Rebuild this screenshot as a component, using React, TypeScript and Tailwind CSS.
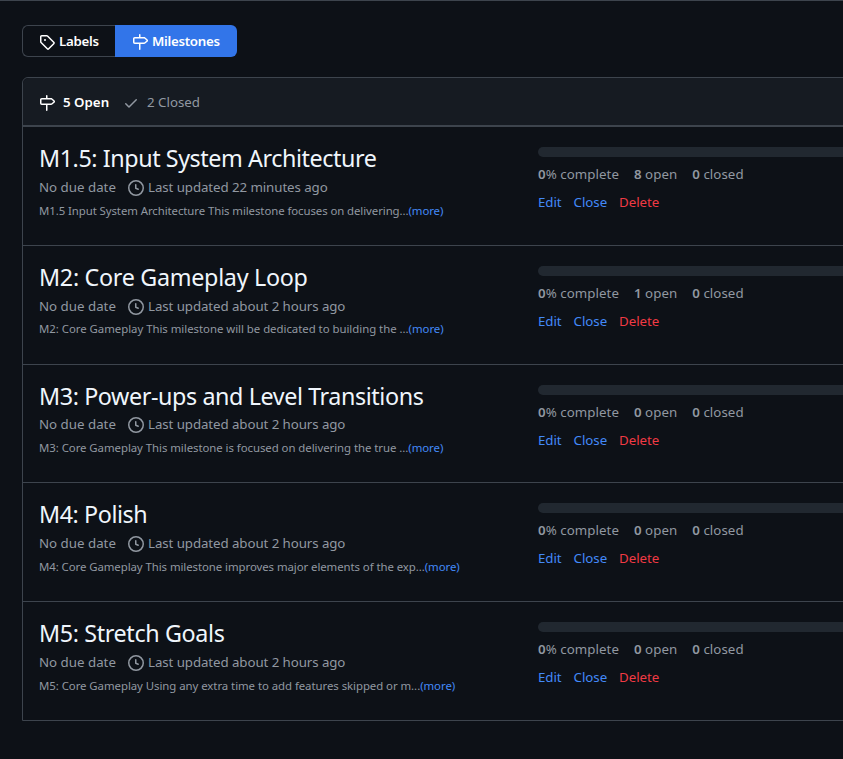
const MILESTONE =
  "M7.75 0a.75.75 0 0 1 .75.75V3h3.634c.414 0 .814.147 1.13.414l2.07 1.75a1.75 1.75 0 0 1 0 2.672l-2.07 1.75a1.75 1.75 0 0 1-1.13.414H8.5v5.25a.75.75 0 0 1-1.5 0V10H2.75A1.75 1.75 0 0 1 1 8.25v-3.5C1 3.784 1.784 3 2.75 3H7V.75A.75.75 0 0 1 7.75 0Zm4.384 8.5a.25.25 0 0 0 .161-.06l2.07-1.75a.248.248 0 0 0 0-.38l-2.07-1.75a.25.25 0 0 0-.161-.06H2.75a.25.25 0 0 0-.25.25v3.5c0 .138.112.25.25.25h9.384Z";
const TAG =
  "M1 7.775V2.75C1 1.784 1.784 1 2.75 1h5.025c.464 0 .91.184 1.238.513l6.25 6.25a1.75 1.75 0 0 1 0 2.474l-5.026 5.026a1.75 1.75 0 0 1-2.474 0l-6.25-6.25A1.752 1.752 0 0 1 1 7.775Zm1.5 0c0 .066.026.13.073.177l6.25 6.25a.25.25 0 0 0 .354 0l5.025-5.025a.25.25 0 0 0 0-.354l-6.25-6.25a.25.25 0 0 0-.177-.073H2.75a.25.25 0 0 0-.25.25ZM6 5a1 1 0 1 1 0 2 1 1 0 0 1 0-2Z";
const CHECK =
  "M13.78 4.22a.75.75 0 0 1 0 1.06l-7.25 7.25a.75.75 0 0 1-1.06 0L2.22 9.28a.751.751 0 0 1 .018-1.042.751.751 0 0 1 1.042-.018L6 10.94l6.72-6.72a.75.75 0 0 1 1.06 0Z";
const CLOCK =
  "M8 0a8 8 0 1 1 0 16A8 8 0 0 1 8 0ZM1.5 8a6.5 6.5 0 1 0 13 0 6.5 6.5 0 0 0-13 0Zm7-3.25v2.992l2.028.812a.75.75 0 0 1-.557 1.392l-2.5-1A.751.751 0 0 1 7 8.25v-3.5a.75.75 0 0 1 1.5 0Z";

function Icon({ d, className = "" }: { d: string; className?: string }) {
  return (
    <svg viewBox="0 0 16 16" className={`size-4 shrink-0 fill-current ${className}`}>
      <path d={d} />
    </svg>
  );
}

const milestones = [
  { title: "M1.5: Input System Architecture", titleTracking: "tracking-[-0.42px]", textTracking: "tracking-[-0.075px]", updated: "22 minutes ago", text: "M1.5 Input System Architecture This milestone focuses on delivering...", open: 8 },
  { title: "M2: Core Gameplay Loop", titleTracking: "tracking-[-0.29px]", textTracking: "tracking-[-0.03px]", updated: "about 2 hours ago", text: "M2: Core Gameplay This milestone will be dedicated to building the ...", open: 1 },
  { title: "M3: Power-ups and Level Transitions", titleTracking: "tracking-[-0.4px]", textTracking: "tracking-[-0.05px]", updated: "about 2 hours ago", text: "M3: Core Gameplay This milestone is focused on delivering the true ...", open: 0 },
  { title: "M4: Polish", titleTracking: "tracking-[-0.42px]", textTracking: "tracking-[-0.065px]", updated: "about 2 hours ago", text: "M4: Core Gameplay This milestone improves major elements of the exp...", open: 0 },
  { title: "M5: Stretch Goals", titleTracking: "tracking-[-0.36px]", textTracking: "tracking-[-0.05px]", updated: "about 2 hours ago", text: "M5: Core Gameplay Using any extra time to add features skipped or m...", open: 0 },
];

export default function App() {
  return (
    <div className="h-[759px] w-[843px] overflow-hidden border-t border-[#3d444d] bg-[#0d1117] pt-6 pl-[22px] font-['Noto_Sans','Open_Sans',sans-serif] text-[13.3px] whitespace-nowrap text-[#9198a1]">
      <nav className="flex h-8 w-[215px] font-semibold text-white">
        <a className="flex w-[93px] items-center gap-1 rounded-l-md border border-r-0 border-[#3d444d] pl-4">
          <Icon d={TAG} className="mt-px" />
          <span className="pt-0.5 tracking-[-0.3px]">Labels</span>
        </a>
        <a className="flex flex-1 items-center gap-1 rounded-r-md bg-[#3275e9] pl-[17px]">
          <Icon d={MILESTONE} className="mt-px" />
          <span className="pt-0.5 tracking-[-0.3px]">Milestones</span>
        </a>
      </nav>
      <main className="mt-5 w-[960px] rounded-tl-md border border-[#3d444d]">
        <header className="flex h-12 items-center rounded-tl-md border-b border-[#3d444d] bg-[#161b22] pl-4">
          <Icon d={MILESTONE} className="mt-0.5 text-white" />
          <span className="ml-2 w-[60px] pt-0.5 font-semibold text-white">5 Open</span>
          <Icon d={CHECK} className="mt-0.5" />
          <span className="ml-2 pt-0.5">2 Closed</span>
        </header>
        {milestones.map((m) => (
          <section key={m.title} className="flex h-[118.75px] border-t border-[#3d444d] pl-4">
            <div className="w-[499px] shrink-0 pt-[15px]">
              <h2 className={`text-[23.3px] leading-8 text-[#f0f6fc] ${m.titleTracking}`}>{m.title}</h2>
              <div className="mt-[1.8px] flex h-6 items-center tracking-[-0.08px]">
                <span className="w-[89px] tracking-normal">No due date</span>
                <Icon d={CLOCK} />
                <span className="ml-1">Last updated {m.updated}</span>
              </div>
              <p className={`mt-[0.9px] text-[11.4px] leading-5 ${m.textTracking}`}>
                {m.text}
                <a className="text-[#4389f8]">(more)</a>
              </p>
            </div>
            <div className="flex-1 pt-5">
              <div className="h-2.5 rounded-l-md bg-[#212830]" />
              <div className="mt-2 flex h-5 items-center gap-[15px] tracking-[0.05px]">
                <span><b className="font-semibold">0</b>% complete</span>
                <span><b className="font-semibold">{m.open}</b> open</span>
                <span><b className="font-semibold">0</b> closed</span>
              </div>
              <div className="mt-2 flex h-5 items-center gap-3 tracking-[-0.05px] text-[#4389f8]">
                <a>Edit</a>
                <a>Close</a>
                <a className="text-[#f03a44]">Delete</a>
              </div>
            </div>
          </section>
        ))}
      </main>
    </div>
  );
}
